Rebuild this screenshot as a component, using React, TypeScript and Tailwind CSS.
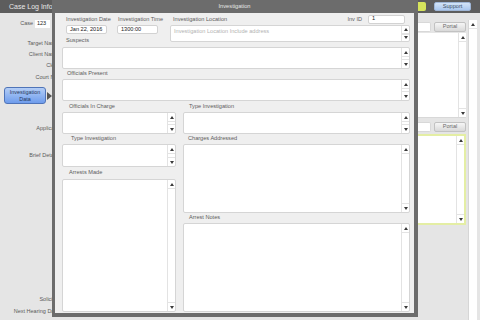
import React from "react";

const Up = () => (
  <svg width="4" height="3" viewBox="0 0 4 3">
    <polygon points="2,0 4,3 0,3" fill="#3a3a3a" />
  </svg>
);

const Down = () => (
  <svg width="4" height="3" viewBox="0 0 4 3">
    <polygon points="0,0 4,0 2,3" fill="#3a3a3a" />
  </svg>
);

const Scroll = ({ cell = "h-[9px]" }: { cell?: string }) => (
  <div className="w-[8px] shrink-0 border-l border-[#e3e3e3] flex flex-col justify-between">
    <div className={`${cell} border-b border-[#e3e3e3] flex items-center justify-center`}>
      <Up />
    </div>
    <div className={`${cell} border-t border-[#e3e3e3] flex items-center justify-center`}>
      <Down />
    </div>
  </div>
);

const Area = ({
  className = "",
  cell,
  children,
}: {
  className?: string;
  cell?: string;
  children?: React.ReactNode;
}) => (
  <div className={`flex shrink-0 bg-white border border-[#d5d5d5] rounded-[2px] ${className}`}>
    <div className="flex-1 min-w-0">{children}</div>
    <Scroll cell={cell} />
  </div>
);

const Label = ({ children, className = "" }: { children: React.ReactNode; className?: string }) => (
  <div className={`flex items-center shrink-0 text-[5.6px] text-[#5c5c5c] whitespace-nowrap ${className}`}>
    {children}
  </div>
);

const Field = ({ value, className = "" }: { value: string; className?: string }) => (
  <div
    className={`h-[9px] flex items-center pl-[3px] bg-white border border-[#d2d2d2] rounded-[2px] text-[5.6px] text-[#222] ${className}`}
  >
    {value}
  </div>
);

const Portal = () => (
  <div className="ml-[3px] w-[32px] h-[10px] flex items-center justify-center rounded-[2px] border border-[#c2c2c2] bg-gradient-to-b from-[#f6f6f6] to-[#d9d9d9] text-[5.5px] text-[#6a6a6a]">
    Portal
  </div>
);

const SideLabel = ({ text, className = "" }: { text: string; className?: string }) => (
  <div className={`w-[59px] h-[7px] flex items-center justify-end text-[5.5px] text-[#5a5a5a] whitespace-nowrap ${className}`}>
    {text}
  </div>
);

export default function App() {
  return (
    <div className="relative w-[480px] h-[320px] overflow-hidden bg-[#e5e5e5] font-['Liberation_Sans',Arial,sans-serif] leading-none">
      {/* app top bar */}
      <div className="h-[13px] bg-[#5d5d5d] flex items-center">
        <span className="ml-[9px] text-[7px] text-[#e8e8e8]">Case Log Information</span>
        <div className="ml-auto w-[30px] h-[9px] rounded-[2px] bg-[#d6e45c]" />
        <div className="ml-[8px] w-[37px] h-[9px] flex items-center justify-center rounded-[2px] border border-[#9fb6d6] bg-gradient-to-b from-[#d3e4f7] to-[#a9c7ee] text-[5.6px] text-[#3d4f66]">
          Support
        </div>
        <div className="w-[9px]" />
      </div>

      <div className="flex h-[307px]">
        {/* left labels */}
        <div className="w-[100px] flex flex-col">
          <div className="mt-[7px] h-[8px] flex items-center">
            <span className="w-[33px] text-right text-[5.5px] text-[#5a5a5a]">Case</span>
            <div className="ml-[2px] w-[15px] h-[8px] flex items-center pl-[2px] bg-white text-[5.5px] text-[#222]">
              123
            </div>
          </div>
          <SideLabel text="Target Name" className="mt-[12px]" />
          <SideLabel text="Client Name" className="mt-[4px]" />
          <SideLabel text="Clerk" className="mt-[4px]" />
          <SideLabel text="Court No." className="mt-[5px]" />
          <div className="mt-[6px] flex items-center">
            <div className="ml-[4px] w-[42px] h-[17px] flex flex-col items-center justify-center rounded-[3px] border border-[#4f74b8] bg-gradient-to-b from-[#b3cdf6] to-[#6e9cec] text-[5.4px] leading-[6.5px] text-[#23375c] text-center">
              <span>Investigation</span>
              <span>Data</span>
            </div>
            <svg width="5" height="8" viewBox="0 0 5 8" className="ml-[1px]">
              <polygon points="0,0 5,4 0,8" fill="#555" />
            </svg>
          </div>
          <SideLabel text="Applicant" className="mt-[21px]" />
          <SideLabel text="Brief Details" className="mt-[20px]" />
          <SideLabel text="Solicitor" className="mt-[137px]" />
          <SideLabel text="Next Hearing Date" className="mt-[5px]" />
        </div>

        <div className="flex-1" />

        {/* right side */}
        <div className="w-[62px] flex">
          <div className="w-[48px] flex flex-col">
            <div className="mt-[9px] h-[10px] flex">
              <div className="w-[13px] bg-white border border-l-0 border-[#d8d8d8] rounded-r-[2px]" />
              <Portal />
            </div>
            <div className="mt-[1px] h-[85px] flex bg-white border-b border-[#d8d8d8]">
              <div className="flex-1" />
              <Scroll />
            </div>
            <div className="mt-[4px] h-[10px] flex">
              <div className="w-[13px] bg-white border border-l-0 border-[#d8d8d8] rounded-r-[2px]" />
              <Portal />
            </div>
            <div className="mt-[2px] h-[91px] flex bg-white border-2 border-l-0 border-[#e4eea4]">
              <div className="flex-1" />
              <Scroll />
            </div>
          </div>
          <div className="ml-[2px] mt-[7px] w-[9px] bg-white border-l border-[#d6d6d6] flex flex-col">
            <div className="h-[9px] border-b border-[#e6e6e6] flex items-center justify-center">
              <Up />
            </div>
          </div>
        </div>
      </div>

      {/* modal */}
      <div className="absolute left-[52px] top-0 w-[366px] h-[317px] bg-[#6c6c6c] pl-[3px] pr-[4px] pb-[4px] flex flex-col">
        <div className="h-[13px] shrink-0 flex items-center justify-center text-[5.7px] text-[#e6e6e6]">
          Investigation
        </div>
        <div className="flex-1 min-h-0 bg-[#efefef] pl-[7px] pr-[4px] pt-[1px] pb-[1px] flex flex-col">
          {/* row 1 */}
          <div className="h-[31px] shrink-0 flex">
            <div className="w-[108px] flex flex-col">
              <div className="flex">
                <div className="ml-[4px] w-[41px]">
                  <Label className="h-[11px]">Investigation Date</Label>
                  <Field value="Jan 22, 2016" />
                </div>
                <div className="ml-[10px] w-[41px]">
                  <Label className="h-[11px] pl-[1px]">Investigation Time</Label>
                  <Field value="1300:00" />
                </div>
              </div>
              <Label className="mt-[3px] h-[8px] ml-[4px]">Suspects</Label>
            </div>
            <div className="w-[240px] flex flex-col">
              <div className="h-[11px] flex items-center">
                <Label className="ml-[3px]">Investigation Location</Label>
                <Label className="ml-auto">Inv ID</Label>
                <Field value="1" className="ml-[6px] w-[37px] mb-[1px]" />
                <div className="w-[5px]" />
              </div>
              <Area className="h-[17px]" cell="h-[8px]">
                <div className="pl-[3px] pt-[3px] text-[5.6px] text-[#b3b3b3] whitespace-nowrap">
                  Investigation Location Include address
                </div>
              </Area>
            </div>
          </div>

          <Area className="mt-[2px] h-[22px]" />
          <Label className="h-[10px] pl-[5px]">Officials Present</Label>
          <Area className="h-[22px]" />

          {/* lower columns */}
          <div className="flex-1 min-h-0 flex gap-[7px]">
            <div className="w-[114px] flex flex-col">
              <Label className="h-[11px] pl-[7px]">Officials In Charge</Label>
              <Area className="h-[22px]" />
              <Label className="h-[10px] pl-[9px]">Type Investigation</Label>
              <Area className="h-[23px]" />
              <Label className="h-[12px] pl-[7px]">Arrests Made</Label>
              <Area className="flex-1 min-h-0" />
            </div>
            <div className="flex-1 flex flex-col">
              <Label className="h-[11px] pl-[6px]">Type Investigation</Label>
              <Area className="h-[22px]" />
              <Label className="h-[10px] pl-[5px]">Charges Addressed</Label>
              <Area className="h-[69px]" />
              <Label className="h-[10px] pl-[6px]">Arrest Notes</Label>
              <Area className="flex-1 min-h-0" />
            </div>
          </div>
        </div>
      </div>
    </div>
  );
}
